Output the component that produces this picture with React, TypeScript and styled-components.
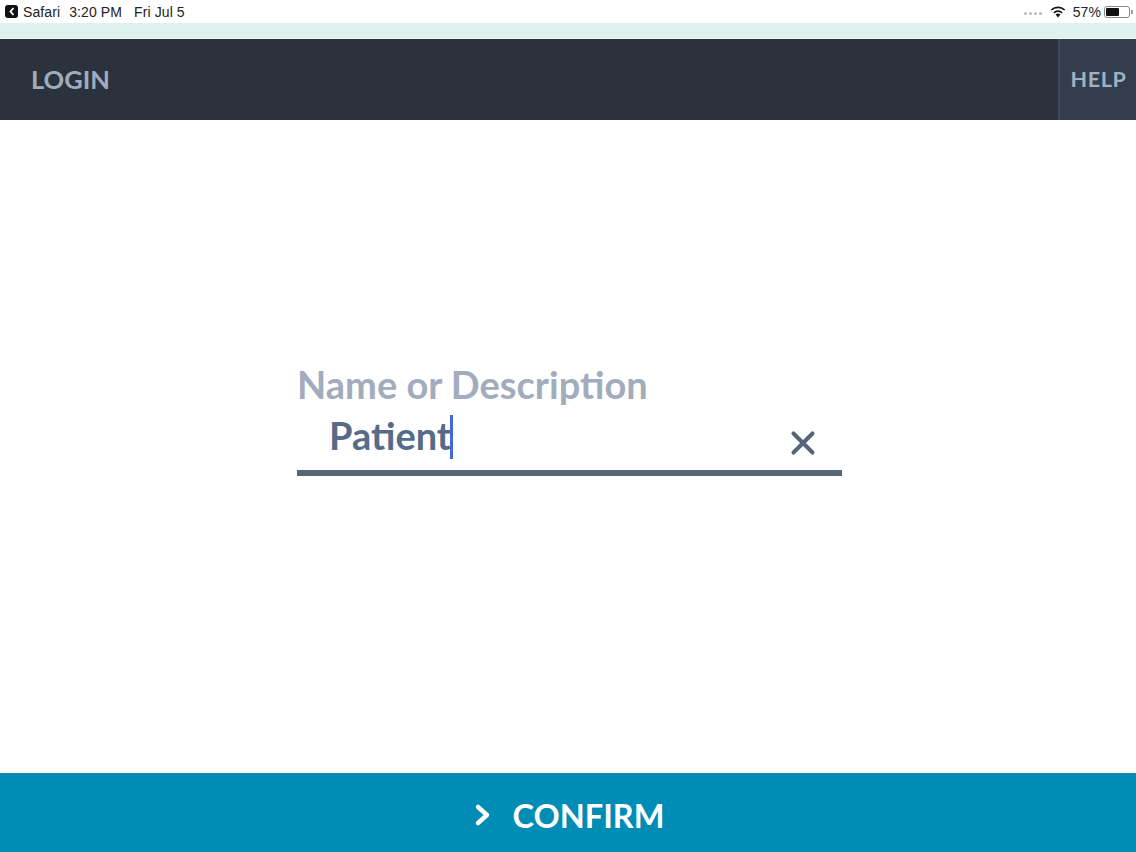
import React from "react";
import styled, { createGlobalStyle } from "styled-components";
import { X } from "lucide-react";

const GlobalStyle = createGlobalStyle`
  html, body {
    margin: 0;
    padding: 0;
    height: 100%;
    background: #fff;
    font-family: Lato, "Liberation Sans", sans-serif;
  }
  #root {
    height: 100%;
  }
`;

const Page = styled.div`
  display: flex;
  flex-direction: column;
  width: 1136px;
  height: 852px;
  overflow: hidden;
`;

const StatusBar = styled.div`
  display: flex;
  align-items: center;
  justify-content: space-between;
  height: 23px;
  padding: 0 3px 0 5px;
  background: #fff;
  font-family: "Liberation Sans", Arial, sans-serif;
  font-size: 14px;
  letter-spacing: 0.1px;
  color: #222;
`;

const StatusGroup = styled.div`
  display: flex;
  align-items: center;
`;

const BackBadge = styled.span`
  display: flex;
  align-items: center;
  justify-content: center;
  width: 13px;
  height: 13px;
  margin-right: 5px;
  border-radius: 3px;
  background: #111;
`;

const StatusText = styled.span<{ $gap?: number }>`
  margin-left: ${(p) => p.$gap ?? 0}px;
`;

const Signal = styled.div`
  display: flex;
  gap: 2px;
  margin-right: 8px;
  margin-top: 4px;
`;

const SignalDot = styled.span`
  width: 3px;
  height: 3px;
  border-radius: 50%;
  background: #bbb;
`;

const Battery = styled.div`
  display: flex;
  align-items: center;
  width: 26px;
  height: 12px;
  margin-left: 3px;
  padding: 1px;
  box-sizing: border-box;
  border: 1px solid #8a8a8a;
  border-radius: 3px;
`;

const BatteryFill = styled.div`
  height: 100%;
  border-radius: 1px;
  background: #111;
`;

const BatteryCap = styled.span`
  width: 2px;
  height: 4px;
  margin-left: 1px;
  border-radius: 0 1px 1px 0;
  background: #999;
`;

const Strip = styled.div`
  height: 15px;
  background: #dff1ec;
  border-bottom: 1px solid #f2f7f6;
`;

const Header = styled.header`
  display: flex;
  align-items: stretch;
  justify-content: space-between;
  height: 81px;
  background: #2b323d;
`;

const HeaderLabel = styled.div`
  display: flex;
  align-items: center;
  padding: 0 0 2px 31px;
  font-size: 25.5px;
  font-weight: 700;
  color: #a0adbd;
`;

const HelpButton = styled.div`
  display: flex;
  align-items: center;
  width: 78px;
  padding: 0 0 2px 10.5px;
  box-sizing: border-box;
  border-left: 2px solid #3f4a58;
  background: #323e4e;
  font-size: 21.5px;
  font-weight: 700;
  letter-spacing: 0.6px;
  color: #a3b0c0;
`;

const Content = styled.main`
  flex: 1;
  display: flex;
  flex-direction: column;
  padding: 242px 0 0 297px;
  background: #fff;
`;

const Field = styled.div`
  display: flex;
  flex-direction: column;
  width: 545px;
`;

const FieldLabel = styled.div`
  font-size: 38px;
  line-height: 44px;
  font-weight: 700;
  color: #a1acbc;
`;

const InputRow = styled.div`
  display: flex;
  align-items: center;
  justify-content: space-between;
  height: 44px;
  padding: 9px 20px 11px 32px;
  border-bottom: 6px solid #566676;
`;

const InputValue = styled.div`
  display: flex;
  align-items: center;
  font-size: 38px;
  line-height: 40px;
  font-weight: 700;
  color: #566b88;
`;

const ValueText = styled.span`
  margin-bottom: 4px;
`;

const Caret = styled.span`
  width: 3px;
  height: 44px;
  margin-left: -1px;
  background: #4268d8;
`;

const ClearIcon = styled(X)`
  margin-top: 12px;
  color: #56657a;
`;

const Footer = styled.footer`
  display: flex;
  align-items: center;
  justify-content: center;
  gap: 21px;
  height: 74px;
  padding: 5px 0 0 2px;
  background: #008db5;
  color: #fff;
  font-size: 32.5px;
  font-weight: 700;
`;

const App = () => (
  <Page>
    <GlobalStyle />
    <StatusBar>
      <StatusGroup>
        <BackBadge>
          <svg width="8" height="9" viewBox="0 0 8 9">
            <path d="M5.5 1 L2.5 4.5 L5.5 8" fill="none" stroke="#fff" strokeWidth="1.8" />
          </svg>
        </BackBadge>
        <span>Safari</span>
        <StatusText $gap={9}>3:20 PM</StatusText>
        <StatusText $gap={12}>Fri Jul 5</StatusText>
      </StatusGroup>
      <StatusGroup>
        <Signal>
          <SignalDot />
          <SignalDot />
          <SignalDot />
          <SignalDot />
        </Signal>
        <svg width="16" height="12" viewBox="0 0 16 12">
          <path d="M8 11.5 L5.6 8.6 A3.6 3.6 0 0 1 10.4 8.6 Z" fill="#111" />
          <path d="M3.9 6.8 A6 6 0 0 1 12.1 6.8" fill="none" stroke="#111" strokeWidth="1.7" />
          <path d="M1.3 4 A9.6 9.6 0 0 1 14.7 4" fill="none" stroke="#111" strokeWidth="1.7" />
        </svg>
        <StatusText $gap={7}>57%</StatusText>
        <Battery>
          <BatteryFill style={{ width: "57%" }} />
        </Battery>
        <BatteryCap />
      </StatusGroup>
    </StatusBar>
    <Strip />
    <Header>
      <HeaderLabel>LOGIN</HeaderLabel>
      <HelpButton>HELP</HelpButton>
    </Header>
    <Content>
      <Field>
        <FieldLabel>Name or Description</FieldLabel>
        <InputRow>
          <InputValue>
            <ValueText>Patient</ValueText>
            <Caret />
          </InputValue>
          <ClearIcon size={38} strokeWidth={2.6} />
        </InputRow>
      </Field>
    </Content>
    <Footer>
      <svg width="18" height="24" viewBox="0 0 18 24">
        <path d="M4 4 L13 12 L4 20" fill="none" stroke="#fff" strokeWidth="4.5" strokeLinecap="round" strokeLinejoin="round" />
      </svg>
      <span>CONFIRM</span>
    </Footer>
  </Page>
);

export default App;
